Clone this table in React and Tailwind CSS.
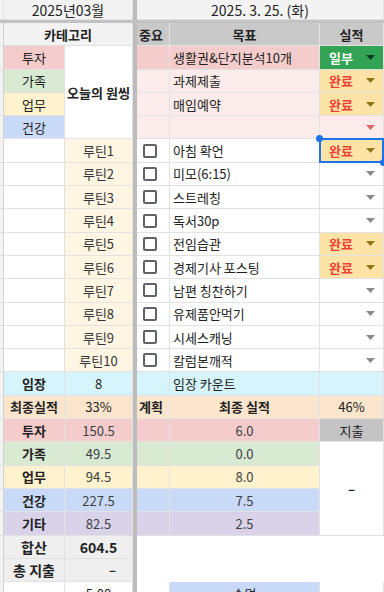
import React from 'react';

const routines = [
  { name: '아침 확언', status: '완료', selected: true },
  { name: '미모(6:15)', status: '' },
  { name: '스트레칭', status: '' },
  { name: '독서30p', status: '' },
  { name: '전임습관', status: '완료' },
  { name: '경제기사 포스팅', status: '완료' },
  { name: '남편 칭찬하기', status: '' },
  { name: '유제품안먹기', status: '' },
  { name: '시세스캐닝', status: '' },
  { name: '칼럼본깨적', status: '' },
];

const summary = [
  { label: '투자', value: '150.5', plan: '6.0', bg: 'bg-[#f4cccc]' },
  { label: '가족', value: '49.5', plan: '0.0', bg: 'bg-[#d9ead3]' },
  { label: '업무', value: '94.5', plan: '8.0', bg: 'bg-[#fff2cc]' },
  { label: '건강', value: '227.5', plan: '7.5', bg: 'bg-[#c9daf8]' },
  { label: '기타', value: '82.5', plan: '2.5', bg: 'bg-[#d9d2e9]' },
];

function Cell({ className = '', children }) {
  return (
    <div className={`flex items-center min-w-0 whitespace-nowrap border-r border-b border-[#e2e2e2] ${className}`}>
      {children}
    </div>
  );
}

function Arrow({ className = '' }) {
  return (
    <svg width="9" height="5" viewBox="0 0 9 5" className={`ml-auto mr-[8px] shrink-0 ${className}`}>
      <path d="M0 0h9L4.5 5z" fill="currentColor" />
    </svg>
  );
}

function Status({ value, selected, bg = 'bg-white', arrow = 'text-[#8a8a8a]' }) {
  if (value === '완료') {
    return (
      <Cell className={`relative bg-[#fde4a6] ${selected ? 'z-10' : ''}`}>
        <span className="pl-[9px] font-bold text-[#ea4335]">완료</span>
        <Arrow className="text-[#8c7818]" />
        {selected && (
          <>
            <div className="absolute -inset-[1px] border-2 border-[#1a73e8] pointer-events-none" />
            <div className="absolute -left-[4px] -top-[4px] w-[7px] h-[7px] rounded-full bg-[#1a73e8]" />
            <div className="absolute -right-[4px] -bottom-[4px] w-[7px] h-[7px] rounded-full bg-[#1a73e8]" />
          </>
        )}
      </Cell>
    );
  }
  if (value === '일부') {
    return (
      <Cell className="bg-[#31a352]">
        <span className="pl-[9px] font-bold text-white">일부</span>
        <Arrow className="text-[#0d3b1c]" />
      </Cell>
    );
  }
  return (
    <Cell className={bg}>
      <Arrow className={arrow} />
    </Cell>
  );
}

function Checkbox() {
  return <div className="ml-[6px] w-[14px] h-[14px] rounded-[2px] border-2 border-[#5f6368] bg-white" />;
}

export default function App() {
  return (
    <div className="w-[384px] h-[592px] overflow-hidden bg-white font-['Noto_Sans_CJK_KR','Noto_Sans',sans-serif] text-[13px] text-[#222] leading-none">
      <div className="grid grid-cols-[4px_61px_68px_4px_33px_150px_64px] grid-rows-[20px_3px_repeat(25,23.3px)]">
        {/* thick separators */}
        <div className="col-start-4 row-start-1 row-end-28 bg-[#bcbcbc]" />
        <div className="col-start-1 col-span-7 row-start-2 bg-[#c2c2c2]" />

        {/* date header */}
        <Cell className="bg-[#f3f3f3] border-[#d0d0d0]" />
        <Cell className="col-span-2 justify-center bg-[#f3f3f3] text-[14px]">2025년03월</Cell>
        <Cell className="col-span-3 justify-center bg-[#f3f3f3] text-[14px]">2025. 3. 25. (화)</Cell>

        {/* column headers */}
        <Cell className="bg-[#f3f3f3] border-r-[#d0d0d0]" />
        <Cell className="col-span-2 justify-center bg-[#f3f3f3] font-bold">카테고리</Cell>
        <Cell className="pl-[2px] bg-[#c9c9c9] font-bold">중요</Cell>
        <Cell className="justify-center bg-[#c9c9c9] font-bold">목표</Cell>
        <Cell className="justify-center bg-[#c9c9c9] font-bold">실적</Cell>

        {/* one thing */}
        <Cell className="bg-[#f3f3f3] border-r-[#d0d0d0]" />
        <Cell className="justify-center bg-[#f4cccc]">투자</Cell>
        <Cell className="row-span-4 justify-center bg-white font-bold">오늘의 원씽</Cell>
        <Cell className="bg-[#f4cccc]" />
        <Cell className="pl-[3px] bg-[#f4cccc]">생활권&amp;단지분석10개</Cell>
        <Status value="일부" />

        <Cell className="bg-[#f3f3f3] border-r-[#d0d0d0]" />
        <Cell className="justify-center bg-[#d9ead3]">가족</Cell>
        <Cell className="bg-[#fcebeb]" />
        <Cell className="pl-[3px] bg-[#fcebeb]">과제제출</Cell>
        <Status value="완료" />

        <Cell className="bg-[#f3f3f3] border-r-[#d0d0d0]" />
        <Cell className="justify-center bg-[#fff2cc]">업무</Cell>
        <Cell className="bg-[#fcebeb]" />
        <Cell className="pl-[3px] bg-[#fcebeb]">매임예약</Cell>
        <Status value="완료" />

        <Cell className="bg-[#f3f3f3] border-r-[#d0d0d0]" />
        <Cell className="justify-center bg-[#c9daf8]">건강</Cell>
        <Cell className="bg-[#fcebeb]" />
        <Cell className="bg-[#fcebeb]" />
        <Status value="" bg="bg-[#fcebeb]" arrow="text-[#e06666]" />

        {/* routines */}
        {routines.map((r, i) => (
          <React.Fragment key={r.name}>
            <Cell className="bg-[#f3f3f3] border-r-[#d0d0d0]" />
            <Cell className="bg-white" />
            <Cell className="justify-center bg-[#fef6e3] text-[#333]">루틴{i + 1}</Cell>
            <Cell className="bg-white">
              <Checkbox />
            </Cell>
            <Cell className="pl-[3px] bg-white">{r.name}</Cell>
            <Status value={r.status} selected={r.selected} />
          </React.Fragment>
        ))}

        {/* field trips */}
        <Cell className="bg-[#f3f3f3] border-r-[#d0d0d0]" />
        <Cell className="justify-center bg-[#d6f4fb] font-bold">임장</Cell>
        <Cell className="justify-center bg-[#d6f4fb]">8</Cell>
        <Cell className="bg-[#d6f4fb]" />
        <Cell className="pl-[3px] bg-[#d6f4fb]">임장 카운트</Cell>
        <Cell className="bg-[#d6f4fb]" />

        {/* final result */}
        <Cell className="bg-[#f3f3f3] border-r-[#d0d0d0]" />
        <Cell className="justify-center bg-[#fce5cd] font-bold">최종실적</Cell>
        <Cell className="justify-center bg-[#fce5cd]">33%</Cell>
        <Cell className="pl-[2px] bg-[#fce5cd] font-bold">계획</Cell>
        <Cell className="justify-center bg-[#fce5cd] font-bold">최종 실적</Cell>
        <Cell className="justify-center bg-[#fce5cd]">46%</Cell>

        {summary.map((s, i) => (
          <React.Fragment key={s.label}>
            <Cell className="bg-[#f3f3f3] border-r-[#d0d0d0]" />
            <Cell className={`justify-center font-bold ${s.bg}`}>{s.label}</Cell>
            <Cell className={`justify-center text-[#3c4043] ${s.bg}`}>{s.value}</Cell>
            <Cell className={s.bg} />
            <Cell className={`justify-center text-[#3c4043] ${s.bg}`}>{s.plan}</Cell>
            {i === 0 && <Cell className="justify-center bg-[#c4c4c4]">지출</Cell>}
            {i === 1 && <Cell className="row-span-4 justify-center bg-white font-bold">–</Cell>}
          </React.Fragment>
        ))}

        {/* totals */}
        <Cell className="bg-[#f3f3f3] border-r-[#d0d0d0]" />
        <Cell className="justify-center bg-[#efefef] font-bold text-[14px]">합산</Cell>
        <Cell className="justify-center bg-[#efefef] font-bold text-[14px]">604.5</Cell>
        <div className="col-span-3 bg-white" />

        <Cell className="bg-[#f3f3f3] border-r-[#d0d0d0]" />
        <Cell className="justify-center bg-[#efefef] font-bold text-[14px]">총 지출</Cell>
        <Cell className="justify-end pr-[16px] bg-[#efefef] font-bold">–</Cell>
        <div className="col-span-3 bg-white" />

        {/* sleep */}
        <Cell className="bg-[#f3f3f3] border-r-[#d0d0d0]" />
        <Cell className="bg-white" />
        <Cell className="justify-center bg-white">5:00</Cell>
        <Cell className="bg-white" />
        <Cell className="justify-center bg-[#c9daf8]">수면</Cell>
        <Cell className="bg-white" />
      </div>
    </div>
  );
}
